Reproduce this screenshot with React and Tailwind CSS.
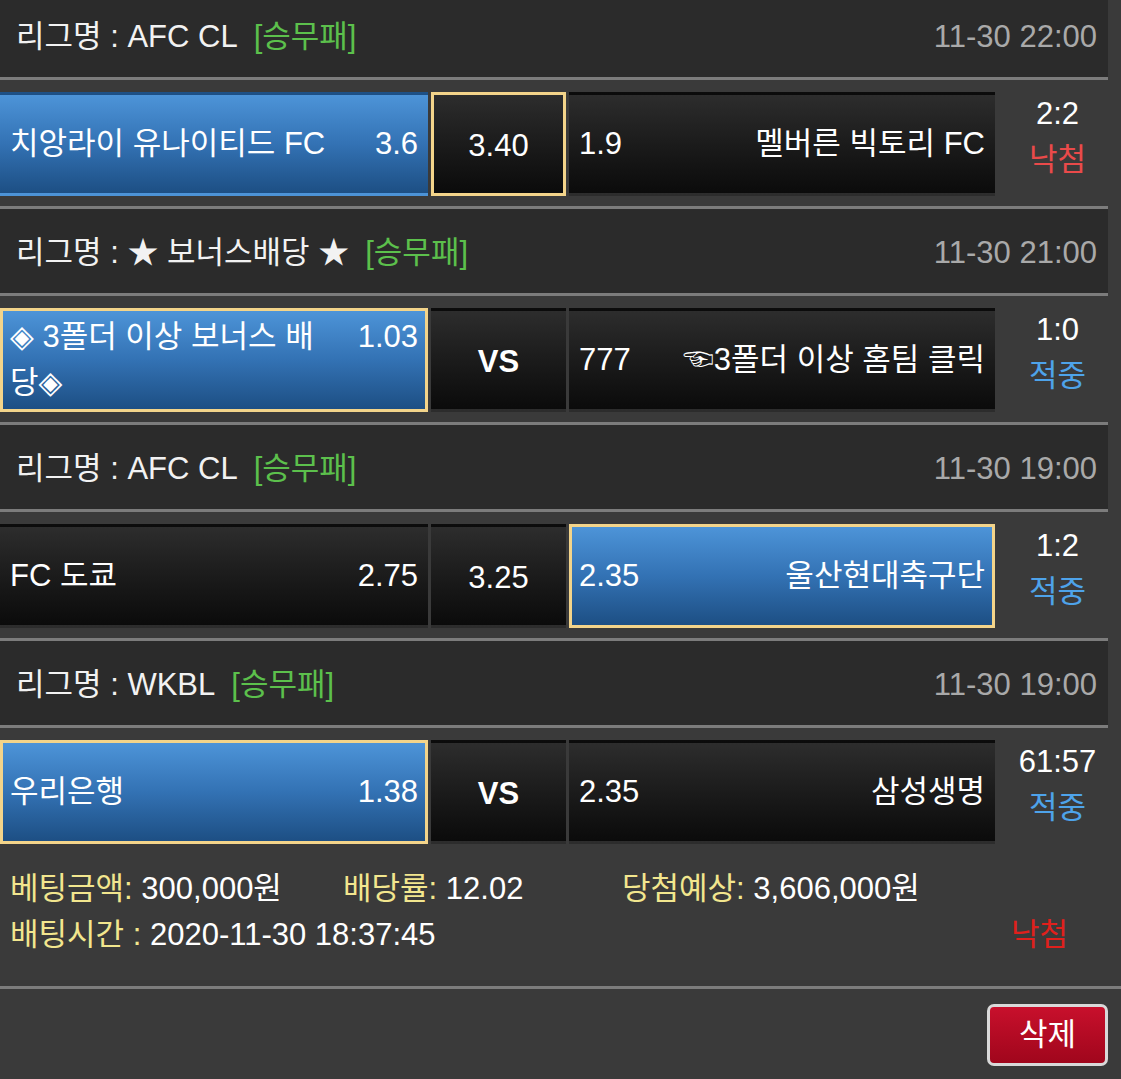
const font = "font-['Liberation_Sans','Noto_Sans_CJK_KR','DejaVu_Sans',sans-serif]";

const bets = [
  {
    league: 'AFC CL',
    time: '11-30 22:00',
    home: '치앙라이 유나이티드 FC',
    homeOdds: '3.6',
    draw: '3.40',
    awayOdds: '1.9',
    away: '멜버른 빅토리 FC',
    score: '2:2',
    result: '낙첨',
    blue: 'home',
    pick: 'draw',
  },
  {
    league: '★ 보너스배당 ★',
    time: '11-30 21:00',
    home: '◈ 3폴더 이상 보너스 배당◈',
    homeOdds: '1.03',
    draw: 'VS',
    awayOdds: '777',
    away: '☜3폴더 이상 홈팀 클릭',
    score: '1:0',
    result: '적중',
    blue: 'home',
    pick: 'home',
  },
  {
    league: 'AFC CL',
    time: '11-30 19:00',
    home: 'FC 도쿄',
    homeOdds: '2.75',
    draw: '3.25',
    awayOdds: '2.35',
    away: '울산현대축구단',
    score: '1:2',
    result: '적중',
    blue: 'away',
    pick: 'away',
  },
  {
    league: 'WKBL',
    time: '11-30 19:00',
    home: '우리은행',
    homeOdds: '1.38',
    draw: 'VS',
    awayOdds: '2.35',
    away: '삼성생명',
    score: '61:57',
    result: '적중',
    blue: 'home',
    pick: 'home',
  },
];

const cellClass = (blue, picked) =>
  [
    'h-full border-[3px]',
    blue
      ? 'bg-linear-to-b from-[#4d94d8] via-[#3372b4] to-[#1d4f84]'
      : 'bg-linear-to-b from-[#2d2d2d] to-[#0b0b0b]',
    picked ? 'border-[#f3d48a]' : 'border-transparent',
  ].join(' ');

const BetSection = ({ bet }) => (
  <div>
    <div className="w-[1108px] h-[90px] bg-[#2b2b2b] border-y-[3px] border-[#7c7c7c] flex items-center justify-between pl-[16px] pr-[11px] pt-[4px]">
      <div className="text-[#f2f2f2]">
        리그명 : {bet.league}
        <span className="ml-[16px] text-[#5cc04c]">[승무패]</span>
      </div>
      <div className="text-[#a9a9a9]">{bet.time}</div>
    </div>

    <div className="pt-[12px] pb-[10px]">
      <div className="w-[1108px] h-[104px] flex">
        <div className={`w-[428px] ${cellClass(bet.blue === 'home', bet.pick === 'home')}`}>
          <div className="h-full flex items-center pl-[7px] pr-[7px] leading-[46px]">
            <div className="w-full">
              <span className="float-right ml-[28px]">{bet.homeOdds}</span>
              {bet.home}
            </div>
          </div>
        </div>
        <div className={`ml-[3px] w-[135px] ${cellClass(false, bet.pick === 'draw')}`}>
          <div className={`h-full flex items-center justify-center pt-[4px] ${bet.draw === 'VS' ? 'font-bold' : ''}`}>
            {bet.draw}
          </div>
        </div>
        <div className={`ml-[3px] w-[426px] ${cellClass(bet.blue === 'away', bet.pick === 'away')}`}>
          <div className="h-full flex items-center justify-between pl-[7px] pr-[7px]">
            <span>{bet.awayOdds}</span>
            <span>{bet.away}</span>
          </div>
        </div>
        <div className="flex-1 flex flex-col items-center justify-center leading-[46px] pl-[12px] pb-[14px]">
          <div>{bet.score}</div>
          <div className={bet.result === '낙첨' ? 'text-[#ea4a4a]' : 'text-[#4ea3ea]'}>{bet.result}</div>
        </div>
      </div>
    </div>
  </div>
);

export default function App() {
  return (
    <div className={`min-h-screen bg-[#3a3a3a] text-white text-[31px] ${font}`}>
      <div className="-mt-[10px]">
        {bets.map((bet, i) => (
          <BetSection key={i} bet={bet} />
        ))}

        <div className="pt-[12px] pb-[28px] pl-[10px] leading-[46px]">
          <div className="flex">
            <div className="w-[333px]">
              <span className="text-[#f2e68e]">베팅금액:</span> 300,000원
            </div>
            <div className="w-[279px]">
              <span className="text-[#f2e68e]">배당률:</span> 12.02
            </div>
            <div>
              <span className="text-[#f2e68e]">당첨예상:</span> 3,606,000원
            </div>
          </div>
          <div className="flex justify-between pr-[53px]">
            <div>
              <span className="text-[#f2e68e]">배팅시간 :</span> 2020-11-30 18:37:45
            </div>
            <div className="text-[#e0201c]">낙첨</div>
          </div>
        </div>

        <div className="border-t-[3px] border-[#7c7c7c] flex justify-end pt-[15px] pr-[13px] pb-[20px]">
          <button className="w-[121px] h-[62px] rounded-[7px] border-[3px] border-[#d9d9d9] bg-linear-to-b from-[#c8102c] to-[#a0061c] text-white text-[31px] flex items-center justify-center">
            삭제
          </button>
        </div>
      </div>
    </div>
  );
}
